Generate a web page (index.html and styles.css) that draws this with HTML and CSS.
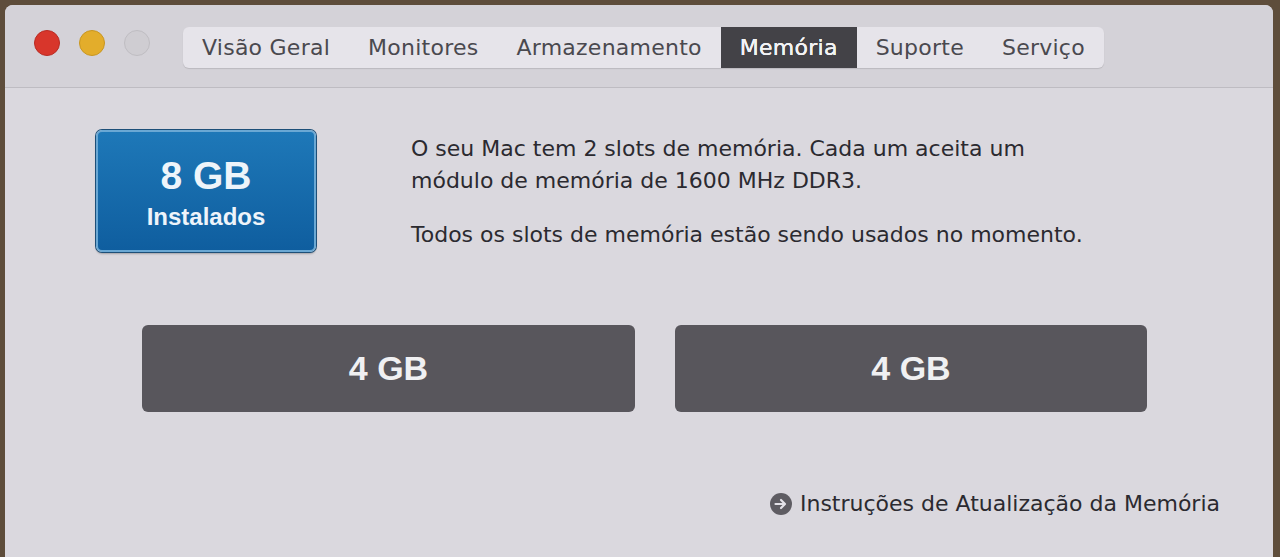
FILE: index.html
```html
<!DOCTYPE html>
<html lang="pt">
<head>
<meta charset="utf-8">
<title>Sobre Este Mac — Memória</title>
<link rel="stylesheet" href="styles.css">
</head>
<body>
<div class="window">
  <div class="titlebar">
    <div class="lights">
      <span class="light red"></span>
      <span class="light yellow"></span>
      <span class="light gray"></span>
    </div>
    <div class="tabs">
      <span class="tab">Visão Geral</span>
      <span class="tab">Monitores</span>
      <span class="tab">Armazenamento</span>
      <span class="tab active">Memória</span>
      <span class="tab">Suporte</span>
      <span class="tab">Serviço</span>
    </div>
  </div>
  <div class="content">
    <div class="top">
      <div class="installed">
        <div class="size">8 GB</div>
        <div class="label">Instalados</div>
      </div>
      <div class="info">
        <p>O seu Mac tem 2 slots de memória. Cada um aceita um<br>módulo de memória de 1600 MHz DDR3.</p>
        <p class="second">Todos os slots de memória estão sendo usados no momento.</p>
      </div>
    </div>
    <div class="slots">
      <div class="slot">4 GB</div>
      <div class="slot">4 GB</div>
    </div>
    <div class="footer">
      <a class="link" href="#"><span class="arrow"><svg width="22" height="22" viewBox="0 0 22 22"><circle cx="11" cy="11" r="11" fill="#5e5c62"/><path d="M5.5 11h9M11 7l4 4-4 4" stroke="#e4e2e8" stroke-width="2.2" fill="none" stroke-linecap="round" stroke-linejoin="round"/></svg></span>Instruções de Atualização da Memória</a>
    </div>
  </div>
</div>
</body>
</html>
```

FILE: styles.css
```css
html, body {
  margin: 0;
  padding: 0;
}
body {
  width: 1280px;
  height: 557px;
  overflow: hidden;
  background: #5e4d3b;
  font-family: "DejaVu Sans", "Liberation Sans", sans-serif;
}
.window {
  margin: 5px 7px 0 5px;
  height: 552px;
  background: #dad8de;
  border-radius: 8px 8px 0 0;
  display: flex;
  flex-direction: column;
}
.titlebar {
  height: 82px;
  border-bottom: 1px solid #bebcc2;
  background: #d4d2d8;
  border-radius: 8px 8px 0 0;
  display: flex;
  align-items: center;
  padding-left: 29px;
}
.lights {
  display: flex;
  gap: 19px;
  margin-top: -6px;
}
.light {
  width: 26px;
  height: 26px;
  border-radius: 50%;
  box-sizing: border-box;
}
.red { background: #d8362b; border: 1px solid #b92a22; }
.yellow { background: #e3ad2b; border: 1px solid #c9961f; }
.gray { background: #cfcdd2; border: 1px solid #bfbdc2; }
.tabs {
  margin-left: 33px;
  display: flex;
  height: 41px;
  background: #e6e4ea;
  border-radius: 6px;
  box-shadow: 0 1px 1px rgba(0,0,0,0.12);
  margin-top: 2px;
}
.tab {
  display: flex;
  align-items: center;
  padding: 0 19px;
  font-size: 22px;
  letter-spacing: 0.25px;
  color: #4a494f;
}
.tab.active {
  background: #434247;
  color: #f2f2f4;
  text-shadow: 0 0 0.6px #f2f2f4, 0 0 0.6px #f2f2f4;
}
.content {
  flex: 1;
  display: flex;
  flex-direction: column;
}
.top {
  display: flex;
  padding: 42px 0 0 91px;
}
.installed {
  width: 220px;
  height: 122px;
  box-sizing: border-box;
  border-radius: 6px;
  background: linear-gradient(#1e78b8, #0f5e9f);
  border: 2px solid #6aa8d4;
  box-shadow: 0 0 0 1px #1d4f78, 0 2px 2px rgba(0,0,0,0.25);
  display: flex;
  flex-direction: column;
  align-items: center;
  color: #eef4fa;
  font-family: "Liberation Sans", sans-serif;
  font-weight: bold;
}
.size {
  font-size: 39px;
  margin-top: 22px;
  line-height: 44px;
}
.label {
  font-size: 24px;
  margin-top: 5px;
  line-height: 28px;
}
.info {
  margin-left: 95px;
  color: #2b2a30;
  font-size: 22px;
}
.info p {
  margin: 3px 0 0 0;
  line-height: 32px;
}
.info p.second {
  margin-top: 22px;
}
.slots {
  display: grid;
  grid-template-columns: 493px 472px;
  gap: 40px;
  padding: 73px 0 0 137px;
}
.slot {
  height: 87px;
  background: #58565c;
  border-radius: 6px;
  display: flex;
  align-items: center;
  justify-content: center;
  color: #f0f0f2;
  font-family: "Liberation Sans", sans-serif;
  font-weight: bold;
  font-size: 34px;
}
.footer {
  display: flex;
  justify-content: flex-end;
  padding: 79px 53px 0 0;
}
.link {
  display: flex;
  align-items: center;
  gap: 8px;
  color: #2b2a30;
  font-size: 22px;
  text-decoration: none;
}
.arrow {
  display: flex;
  width: 22px;
  height: 22px;
}
```
